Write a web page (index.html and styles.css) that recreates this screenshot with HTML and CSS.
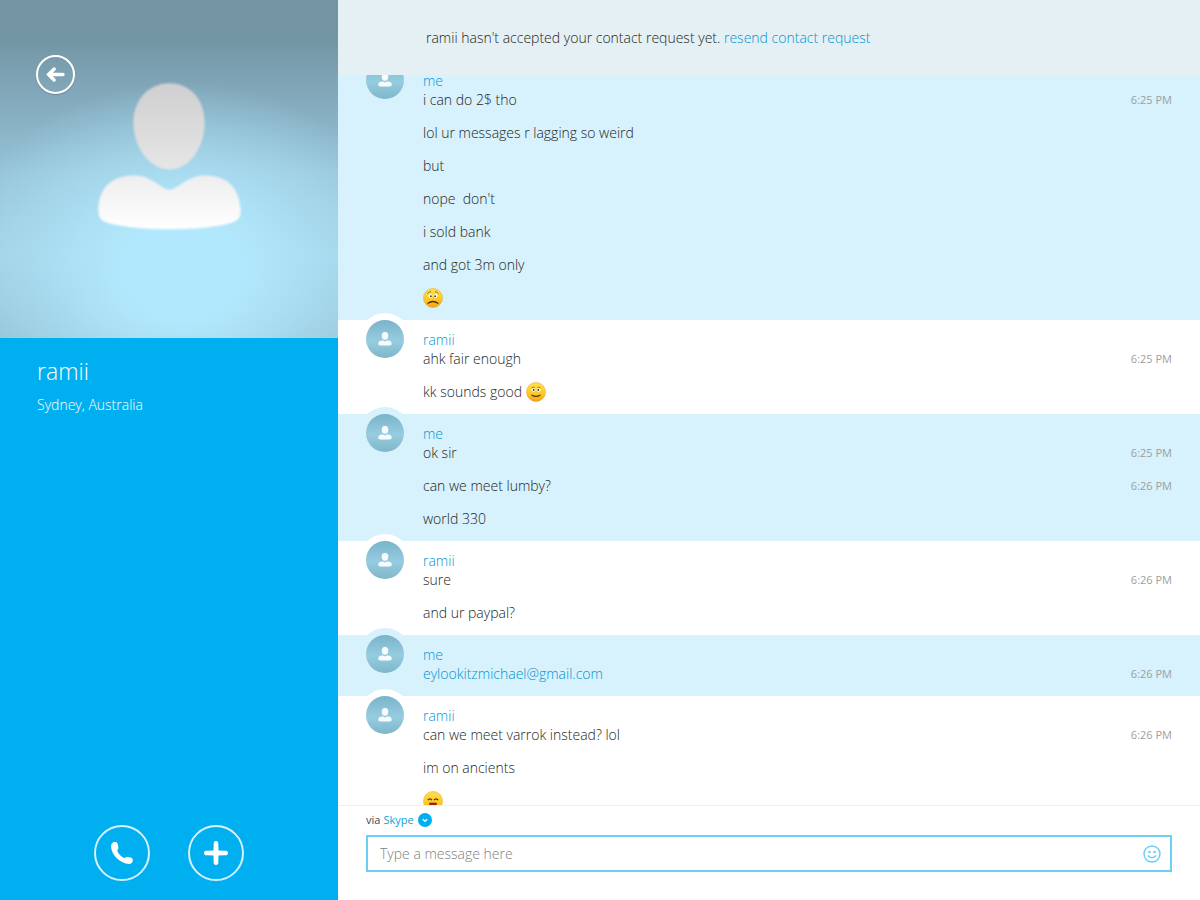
FILE: index.html
```html
<!DOCTYPE html>
<html lang="en">

<head>
    <meta charset="UTF-8">
    <meta name="viewport" content="width=device-width, initial-scale=1.0">
    <title>ramii</title>
    <link rel="stylesheet" href="styles.css">
</head>

<body>

    <!-- shared icons -->
    <svg class="icons" aria-hidden="true">
        <defs>
            <linearGradient id="face" x1="0" y1="0" x2="0" y2="1">
                <stop offset="0" stop-color="#ffe04a" />
                <stop offset="0.6" stop-color="#fdc924" />
                <stop offset="1" stop-color="#f2a01c" />
            </linearGradient>
        </defs>
        <symbol id="person" viewBox="0 0 14 14">
            <ellipse cx="7" cy="3.8" rx="3.3" ry="3.9" />
            <path d="M.3 11.4C.5 9.400 2 8.500 4 8.500C5.500 8.500 6 9.300 7 9.300C8 9.300 8.500 8.500 10 8.500C12 8.500 13.500 9.400 13.700 11.400C13.700 13.300 12.500 13.600 7 13.600C1.500 13.600 .3 13.300 .3 11.400z" />
        </symbol>
    </svg>

    <aside class="profile">
        <div class="photo">
            <button class="back" type="button" aria-label="Back">
                <svg viewBox="0 0 20 20"><path d="M16.500 10H4.500M8.800 5.200 4 10l4.800 4.800" /></svg>
            </button>
            <svg class="silhouette" viewBox="0 0 337 337" aria-hidden="true">
                <defs>
                    <linearGradient id="head" x1="0" y1="0" x2="0" y2="1">
                        <stop offset="0" stop-color="#cfcfd1" />
                        <stop offset="1" stop-color="#e6e6e6" />
                    </linearGradient>
                    <linearGradient id="chest" x1="0" y1="0" x2="0" y2="1">
                        <stop offset="0" stop-color="#eeeeef" />
                        <stop offset="1" stop-color="#ffffff" />
                    </linearGradient>
                </defs>
                <path fill="url(#head)" d="M169 83C190 83 204 100 204 122C204 147 189 169 169 169C149 169 133 147 133 122C133 100 148 83 169 83z" />
                <path fill="url(#chest)" d="M98 209C99 187 111 175 134 175C152 175 160 189 169 189C178 189 186 175 204 175C227 175 238 187 240 209C240 219 237 221 224 224C190 230 148 230 114 224C101 221 98 219 98 209z" />
            </svg>
        </div>
        <h1 class="name">ramii</h1>
        <p class="location">Sydney, Australia</p>
        <div class="actions">
            <button class="round" type="button" aria-label="Call">
                <svg viewBox="0 0 24 24"><path d="M5.500 1C3 .500 1 2.500 1 5.500 1.500 14.500 10.500 22.500 19 23c2.500 0 4-2 3.800-4.300-.100-1.500-1-1.900-2.300-2.200l-2.700-.600c-1.600-.300-2 .900-3.300 1.200-3-1-6-4-7.300-7.300.300-1.300 1.500-1.900 1.200-3.300L7.700 3.200C7.400 1.700 6.800 1.200 5.500 1z" /></svg>
            </button>
            <button class="round" type="button" aria-label="Add">
                <svg viewBox="0 0 24 24"><path d="M12 0c1.700 0 2.300 1 2.300 2.500l.200 7 7 .200c1.500 0 2.500.600 2.500 2.300s-1 2.300-2.500 2.300l-7 .200-.200 7c0 1.500-.600 2.500-2.300 2.500s-2.300-1-2.300-2.500l-.200-7-7-.200C1 14.300 0 13.700 0 12s1-2.300 2.500-2.300l7-.200.200-7C9.700 1 10.300 0 12 0z" /></svg>
            </button>
        </div>
    </aside>

    <main class="chat">
        <header class="notice">
            <p>ramii hasn't accepted your contact request yet. <a href="#">resend contact request</a></p>
        </header>

        <div class="messages">
            <section class="group group--me">
                <div class="avatar"><svg><use href="#person" /></svg></div>
                <div class="content">
                    <h2>me</h2>
                    <ul>
                        <li><span>i can do 2$ tho</span><time>6:25 PM</time></li>
                        <li>lol ur messages r lagging so weird</li>
                        <li>but</li>
                        <li>nope&nbsp; don't</li>
                        <li>i sold bank</li>
                        <li>and got 3m only</li>
                        <li>
                            <svg class="emoji" viewBox="0 0 20 20" role="img" aria-label="sad">
                                <circle cx="10" cy="10" r="9.500" fill="url(#face)" stroke="#e9a63a" stroke-width=".6" />
                                <path d="M4.500 5.500Q6 3.500 8 3.600M12 3.600Q14 3.500 15.500 5.500" fill="none" stroke="#a8701c" />
                                <ellipse cx="7.500" cy="7.800" rx="2" ry="1.900" fill="#fff" />
                                <ellipse cx="12.500" cy="7.800" rx="2" ry="1.900" fill="#fff" />
                                <circle cx="7.900" cy="8.200" r=".9" fill="#333" />
                                <circle cx="12.100" cy="8.200" r=".9" fill="#333" />
                                <path d="M5 15.200Q10 11.800 15 15.200" fill="none" stroke="#50300c" stroke-width="1.300" stroke-linecap="round" />
                            </svg>
                        </li>
                    </ul>
                </div>
            </section>

            <section class="group">
                <div class="avatar"><svg><use href="#person" /></svg></div>
                <div class="content">
                    <h2>ramii</h2>
                    <ul>
                        <li><span>ahk fair enough</span><time>6:25 PM</time></li>
                        <li>
                            <span>kk sounds good</span>
                            <svg class="emoji emoji--after" viewBox="0 0 20 20" role="img" aria-label="smile">
                                <circle cx="10" cy="10" r="9.500" fill="url(#face)" stroke="#e9a63a" stroke-width=".6" />
                                <path d="M5.800 5.700Q7 4.700 8.500 5.500M11.500 5.500Q13 4.700 14.200 5.700" fill="none" stroke="#a8701c" />
                                <ellipse cx="7.500" cy="8" rx="2" ry="1.700" fill="#fff" />
                                <ellipse cx="12.500" cy="8" rx="2" ry="1.700" fill="#fff" />
                                <circle cx="7.700" cy="8" r=".9" fill="#333" />
                                <circle cx="12.300" cy="8" r=".9" fill="#333" />
                                <path d="M6 13.200Q10 15.600 14 13.200" fill="none" stroke="#50300c" stroke-width="1.300" stroke-linecap="round" />
                            </svg>
                        </li>
                    </ul>
                </div>
            </section>

            <section class="group group--me">
                <div class="avatar"><svg><use href="#person" /></svg></div>
                <div class="content">
                    <h2>me</h2>
                    <ul>
                        <li><span>ok sir</span><time>6:25 PM</time></li>
                        <li><span>can we meet lumby?</span><time>6:26 PM</time></li>
                        <li>world 330</li>
                    </ul>
                </div>
            </section>

            <section class="group">
                <div class="avatar"><svg><use href="#person" /></svg></div>
                <div class="content">
                    <h2>ramii</h2>
                    <ul>
                        <li><span>sure</span><time>6:26 PM</time></li>
                        <li>and ur paypal?</li>
                    </ul>
                </div>
            </section>

            <section class="group group--me">
                <div class="avatar"><svg><use href="#person" /></svg></div>
                <div class="content">
                    <h2>me</h2>
                    <ul>
                        <li><a href="mailto:eylookitzmichael@gmail.com">eylookitzmichael@gmail.com</a><time>6:26 PM</time></li>
                    </ul>
                </div>
            </section>

            <section class="group">
                <div class="avatar"><svg><use href="#person" /></svg></div>
                <div class="content">
                    <h2>ramii</h2>
                    <ul>
                        <li><span>can we meet varrok instead? lol</span><time>6:26 PM</time></li>
                        <li>im on ancients</li>
                        <li>
                            <svg class="emoji" viewBox="0 0 20 20" role="img" aria-label="laugh">
                                <circle cx="10" cy="10" r="9.500" fill="url(#face)" stroke="#e9a63a" stroke-width=".6" />
                                <path d="M4.800 9.200Q7 6.500 9 9.200M11 9.200Q13 6.500 15.200 9.200" fill="none" stroke="#50300c" stroke-width="1.200" />
                                <path d="M6.500 12h7c0 6-7 6-7 0z" fill="#b01c14" stroke="#50300c" stroke-width=".6" />
                            </svg>
                        </li>
                    </ul>
                </div>
            </section>
        </div>

        <form class="composer">
            <div class="via">
                <label for="service">via</label>
                <div class="service">
                    <select id="service">
                        <option>Skype</option>
                    </select>
                    <svg viewBox="0 0 14 14" aria-hidden="true"><circle cx="7" cy="7" r="7" fill="#00aff0" /><path d="M4.800 6.200 7 8.200l2.200-2" fill="none" stroke="#fff" stroke-width="1.500" /></svg>
                </div>
            </div>
            <div class="field">
                <input type="text" placeholder="Type a message here" aria-label="Message">
                <button type="button" aria-label="Emoticons">
                    <svg viewBox="0 0 18 18"><circle cx="9" cy="9" r="8" fill="none" stroke="#6ecff6" stroke-width="1.500" /><circle cx="6.500" cy="7" r="1.300" fill="#6ecff6" /><circle cx="11.500" cy="7" r="1.300" fill="#6ecff6" /><path d="M4.800 10.500Q9 15 13.200 10.500" fill="none" stroke="#6ecff6" stroke-width="1.500" /></svg>
                </button>
            </div>
        </form>
    </main>

</body>

</html>
```

FILE: styles.css
```css
* {
    box-sizing: border-box;
}

body {
    display: flex;
    height: 100vh;
    margin: 0;
    overflow: hidden;
    font-family: "Open Sans", "Noto Sans", sans-serif;
    font-size: 14px;
    font-weight: 300;
    line-height: 20px;
    color: #1c1f22;
    background-color: #fff;
}

h1, h2, p, ul {
    margin: 0;
    padding: 0;
    font-weight: inherit;
}

a {
    color: #0095cf;
    text-decoration: none;
}

button {
    padding: 0;
    border: none;
    background: none;
    cursor: pointer;
}

svg {
    display: block;
}

.icons {
    position: absolute;
    width: 0;
    height: 0;
}

/* left column */
.profile {
    display: flex;
    flex-direction: column;
    flex: 0 0 338px;
    color: #fff;
    background-color: #00aff0;
}

.photo {
    position: relative;
    aspect-ratio: 1;
    background:
        radial-gradient(ellipse 68% 56% at 54% 80%, rgba(178, 232, 253, 1) 25%, rgba(178, 232, 253, 0.6) 55%, rgba(178, 232, 253, 0) 100%),
        linear-gradient(#7395a1 0, #7395a1 11%, #789cac 17%, #86aec1 33%, #97c4d7 52%, #a0cfe1 75%, #93c1d4 100%);
}

.silhouette {
    width: 100%;
    filter: blur(1px);
}

.back {
    position: absolute;
    top: 55px;
    left: 36px;
    z-index: 1;
    width: 39px;
    height: 39px;
    border: 2px solid #fff;
    border-radius: 50%;
    box-shadow: 0 1px 1px rgba(0, 0, 0, 0.2);
}

.back svg {
    width: 23px;
    margin: 0 auto;
    fill: none;
    stroke: #fff;
    stroke-width: 3;
    stroke-linecap: round;
}

.name {
    padding: 17px 37px 0;
    font-size: 23px;
    line-height: 32px;
}

.location {
    padding: 8px 37px 0;
}

.actions {
    display: flex;
    justify-content: center;
    gap: 38px;
    margin-top: auto;
    padding-bottom: 19px;
}

.round {
    width: 56px;
    height: 56px;
    border: 2px solid #d5f2fd;
    border-radius: 50%;
}

.round svg {
    width: 24px;
    margin: 0 auto;
    fill: #fff;
}

/* conversation */
.chat {
    display: flex;
    flex-direction: column;
    flex: 1;
    min-width: 0;
}

.notice {
    z-index: 1;
    padding: 28px 28px 27px 88px;
    background-color: #e5f0f4;
}

.messages {
    flex: 1;
    min-height: 0;
    overflow: hidden;
}

.group {
    --group-color: #fff;
    display: flex;
    gap: 19px;
    padding: 0 28px;
    background-color: var(--group-color);
}

.group--me {
    --group-color: #d7f1fd;
}

.group:first-child {
    margin-top: -14px;
}

.avatar {
    flex: none;
    display: flex;
    align-items: center;
    justify-content: center;
    width: 38px;
    height: 38px;
    border-radius: 50%;
    background: linear-gradient(#79b4ca, #96cce0 55%, #7eb6ca);
    box-shadow: 0 0 0 7px var(--group-color);
}

.avatar svg {
    width: 14px;
    height: 14px;
    fill: #f7fbfd;
}

.content {
    flex: 1;
    padding: 10px 0 12px;
}

.content h2 {
    font-size: 14px;
    line-height: 19px;
    color: #0095cf;
}

.content ul {
    display: flex;
    flex-direction: column;
    gap: 13px;
    list-style: none;
}

.content li {
    display: flex;
    align-items: center;
    height: 20px;
}

time {
    margin-left: auto;
    font-size: 11px;
    font-weight: 400;
    color: #9a9fa3;
}

.emoji {
    width: 20px;
    height: 20px;
}

.emoji--after {
    margin-left: 4px;
}

/* message box */
.composer {
    padding: 4px 28px 28px;
    border-top: 1px solid #e0f4fd;
}

.via {
    display: flex;
    gap: 3px;
    margin-bottom: 5px;
    font-size: 11px;
    font-weight: 400;
    color: #45494d;
}

.service {
    position: relative;
}

.service select {
    appearance: none;
    display: block;
    height: 20px;
    padding: 0 18px 0 0;
    border: none;
    font: inherit;
    color: #0f9fd6;
    background: none;
}

.service svg {
    position: absolute;
    top: 3px;
    right: 0;
    width: 14px;
    pointer-events: none;
}

.field {
    display: flex;
    align-items: center;
    height: 37px;
    padding: 0 9px 0 12px;
    border: 2px solid #6ecff6;
}

.field input {
    flex: 1;
    min-width: 0;
    padding: 0;
    border: none;
    outline: none;
    font: inherit;
    color: inherit;
    background: none;
}

.field input::placeholder {
    color: #7c8184;
}

.field button svg {
    width: 18px;
}
```
